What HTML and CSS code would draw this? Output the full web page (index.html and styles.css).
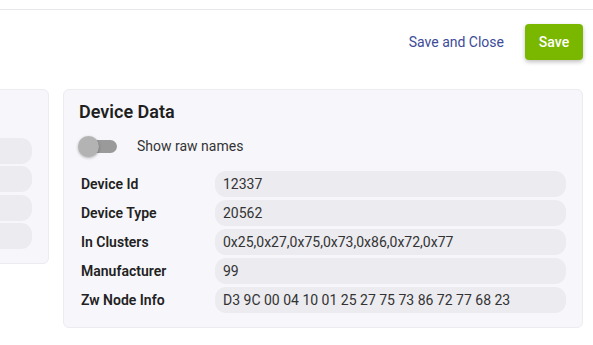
FILE: index.html
```html
<!DOCTYPE html>
<html lang="en">
<head>
    <meta charset="UTF-8">
    <title>Device</title>
    <link rel="stylesheet" href="styles.css">
</head>
<body>
<div class="topbar"></div>

<div class="toolbar">
    <button class="btn-text">Save and Close</button>
    <button class="btn-save">Save</button>
</div>

<div class="panels">
    <div class="panel panel-side">
        <div class="pill"></div>
        <div class="pill"></div>
        <div class="pill"></div>
        <div class="pill"></div>
    </div>

    <div class="panel panel-main">
        <h2>Device Data</h2>
        <div class="toggle-row">
            <span class="toggle"><span class="knob"></span></span>
            <span>Show raw names</span>
        </div>
        <div class="data-grid">
            <div class="label">Device Id</div>
            <div class="value">12337</div>
            <div class="label">Device Type</div>
            <div class="value">20562</div>
            <div class="label">In Clusters</div>
            <div class="value">0x25,0x27,0x75,0x73,0x86,0x72,0x77</div>
            <div class="label">Manufacturer</div>
            <div class="value">99</div>
            <div class="label">Zw Node Info</div>
            <div class="value">D3 9C 00 04 10 01 25 27 75 73 86 72 77 68 23</div>
        </div>
    </div>
</div>
</body>
</html>
```

FILE: styles.css
```css
body {
    margin: 0;
    background: #fff;
    font-family: Roboto, "Liberation Sans", sans-serif;
    font-size: 14px;
    color: #2b2b2b;
    overflow: hidden;
}

.topbar {
    height: 9px;
    border-bottom: 1px solid #e7e7ec;
}

.toolbar {
    display: flex;
    justify-content: flex-end;
    align-items: center;
    gap: 5px;
    padding: 14px 10px 0 0;
    height: 36px;
    margin-bottom: 29px;
}
.toolbar button {
    font-family: inherit;
    font-size: 14px;
    height: 36px;
    border: none;
    cursor: pointer;
}
.btn-text {
    background: none;
    color: #3d4b98;
    padding: 0 16px;
}
.btn-save {
    background: #7ab800;
    color: #fff;
    font-weight: 500;
    width: 58px;
    border-radius: 4px;
    box-shadow: 0 2px 4px rgba(0, 0, 0, 0.25);
}

.panels {
    display: flex;
    align-items: flex-start;
    gap: 14px;
    margin-right: 10px;
}
.panel {
    background: #f7f7fb;
    border: 1px solid #ebebf0;
    border-radius: 6px;
    box-sizing: border-box;
}
.panel-side {
    width: 220px;
    margin-left: -171px;
    flex-shrink: 0;
    padding: 48px 16px 14px 16px;
    display: flex;
    flex-direction: column;
    gap: 2.4px;
}
.pill {
    height: 26px;
    background: #ebebf0;
    border-radius: 11px;
}
.panel-main {
    flex: 1;
    padding: 10px 16px 14px 15px;
}
.panel-main h2 {
    margin: 0;
    font-size: 18px;
    line-height: 24px;
    font-weight: 600;
    color: #1f1f1f;
}

.toggle-row {
    display: flex;
    align-items: center;
    height: 24px;
    margin: 10px 0 13px 0;
    gap: 20px;
    color: #333;
}
.toggle {
    position: relative;
    width: 38px;
    height: 13px;
    border-radius: 7px;
    background: #9a9a9a;
}
.knob {
    position: absolute;
    left: -1px;
    top: -4px;
    width: 21px;
    height: 21px;
    border-radius: 50%;
    background: #b3b3b3;
    box-shadow: 0 1px 3px rgba(0, 0, 0, 0.3);
}

.data-grid {
    display: grid;
    grid-template-columns: 136px 1fr;
    row-gap: 3px;
}
.label {
    padding-left: 2px;
    font-weight: 600;
    color: #222;
    line-height: 26px;
}
.value {
    background: #ebebf0;
    border-radius: 11px;
    padding: 0 8px;
    line-height: 26px;
    color: #333;
}
```
